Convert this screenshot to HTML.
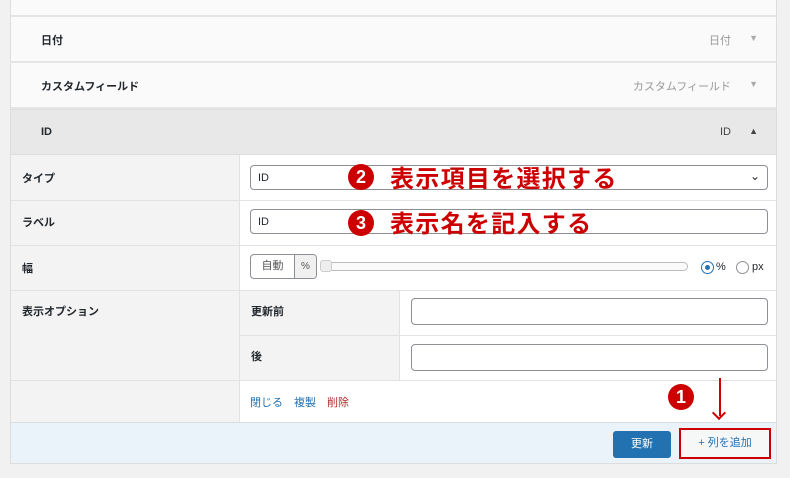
<!DOCTYPE html><html><head><meta charset="utf-8"><style>
*{box-sizing:border-box;margin:0;padding:0}
body{width:790px;height:478px;background:#f1f1f1;font-family:"Liberation Sans","Noto Sans CJK JP",sans-serif;font-size:11px;color:#23282d;position:relative;overflow:hidden}
.p{position:absolute;left:10px;width:767px;border-left:1px solid #ddd;border-right:1px solid #ddd}
.hd{background:#fafafa;border-bottom:2px solid #e5e5e5;font-weight:bold}
.a{position:absolute;font-size:11px}
.in{position:absolute;background:#fff;border:1px solid #8c8f94;border-radius:4px;height:25px;font-size:11px;padding:6px 7px}
.r{color:#c00;font-weight:bold;font-size:24px;line-height:26px;position:absolute;letter-spacing:1.3px}
.c{position:absolute;width:26px;height:26px;border-radius:50%;background:#c00;color:#fff;font-weight:bold;font-size:18px;text-align:center;line-height:26px}
</style></head><body>
<div class="p hd" style="top:0;height:17px"></div>
<div class="p hd" style="top:17px;height:46px"><span class="a" style="left:30px;top:15px">日付</span><span class="a" style="right:45px;top:15px;color:#999;font-weight:normal">日付</span><span class="a" style="right:18px;top:16px;color:#aaa;font-size:9px">▼</span></div>
<div class="p hd" style="top:63px;height:46px"><span class="a" style="left:30px;top:15px">カスタムフィールド</span><span class="a" style="right:45px;top:15px;color:#999;font-weight:normal">カスタムフィールド</span><span class="a" style="right:18px;top:16px;color:#aaa;font-size:9px">▼</span></div>
<div class="p" style="top:109px;height:46px;background:#e8e8e8;border-top:1px solid #ddd;border-bottom:1px solid #ddd;font-weight:bold"><span class="a" style="left:30px;top:16px">ID</span><span class="a" style="right:45px;top:16px;font-weight:normal;color:#444">ID</span><span class="a" style="right:18px;top:16px;font-size:9px;color:#444">▲</span></div>
<div class="p" style="top:155px;height:267px;background:#fff">
<div style="position:absolute;left:0;top:0;width:229px;height:267px;background:#f3f3f3;border-right:1px solid #e2e2e2"></div>
<div style="position:absolute;left:229px;top:135px;width:160px;height:90px;background:#f3f3f3;border-right:1px solid #e2e2e2"></div>
<div style="position:absolute;left:0;right:0;top:45px;border-top:1px solid #e2e2e2"></div>
<div style="position:absolute;left:0;right:0;top:90px;border-top:1px solid #e2e2e2"></div>
<div style="position:absolute;left:0;right:0;top:135px;border-top:1px solid #e2e2e2"></div>
<div style="position:absolute;left:229px;right:0;top:180px;border-top:1px solid #e2e2e2"></div>
<div style="position:absolute;left:0;right:0;top:225px;border-top:1px solid #e2e2e2"></div>
<span class="a" style="left:11px;top:15px;font-weight:bold">タイプ</span>
<span class="a" style="left:11px;top:59px;font-weight:bold">ラベル</span>
<span class="a" style="left:11px;top:105px;font-weight:bold">幅</span>
<span class="a" style="left:11px;top:148px;font-weight:bold">表示オプション</span>
<span class="a" style="left:240px;top:148px;font-weight:bold">更新前</span>
<span class="a" style="left:240px;top:193px;font-weight:bold">後</span>
<span class="a" style="left:239px;top:239px;color:#2271b1">閉じる　複製　<span style="color:#b32d2e">削除</span></span>
</div>
<div class="in" style="left:250px;top:165px;width:518px">ID<span style="position:absolute;right:7px;top:3px;font-size:12px">⌄</span></div>
<div class="in" style="left:250px;top:209px;width:518px">ID</div>
<div class="in" style="left:250px;top:254px;width:67px;padding:0;display:flex;color:#555"><span style="width:43px;text-align:center;line-height:23px">自動</span><span style="flex:1;background:#f0f0f0;border-left:1px solid #8c8f94;text-align:center;line-height:23px;font-size:10px;border-radius:0 3px 3px 0">%</span></div>
<div style="position:absolute;left:321px;top:262px;width:367px;height:9px;border:1px solid #bbb;border-radius:5px;background:#fafafa"></div>
<div style="position:absolute;left:320px;top:260px;width:12px;height:12px;border:1px solid #ccc;border-radius:3px;background:#eee"></div>
<div style="position:absolute;left:701px;top:261px;width:13px;height:13px;border:1px solid #2271b1;border-radius:50%;background:#fff"><div style="margin:3px;width:5px;height:5px;border-radius:50%;background:#2271b1"></div></div>
<span class="a" style="left:716px;top:261px">%</span>
<div style="position:absolute;left:736px;top:261px;width:13px;height:13px;border:1px solid #8c8f94;border-radius:50%;background:#fff"></div>
<span class="a" style="left:752px;top:261px">px</span>
<div class="in" style="left:411px;top:298px;width:357px;height:27px"></div>
<div class="in" style="left:411px;top:344px;width:357px;height:27px"></div>
<div class="p" style="top:422px;height:42px;background:#eaf2fa;border-top:1px solid #ddd;border-bottom:1px solid #ddd"></div>
<div style="position:absolute;left:613px;top:431px;width:58px;height:27px;background:#2271b1;border-radius:3px;color:#fff;text-align:center;line-height:27px">更新</div>
<div style="position:absolute;left:679px;top:428px;width:92px;height:31px;border:2px solid #c00;background:#f6f7f7;color:#2271b1;text-align:center;line-height:27px">+ 列を追加</div>
<div class="c" style="left:348px;top:164px">2</div><span class="r" style="left:390px;top:167px">表示項目を選択する</span>
<div class="c" style="left:348px;top:210px">3</div><span class="r" style="left:390px;top:212px">表示名を記入する</span>
<div class="c" style="left:668px;top:384px">1</div>
<div style="position:absolute;left:719px;top:378px;width:2px;height:38px;background:#c00"></div>
<div style="position:absolute;left:714px;top:408px;width:10px;height:10px;border-right:2px solid #c00;border-bottom:2px solid #c00;transform:rotate(45deg)"></div>
</body></html>
